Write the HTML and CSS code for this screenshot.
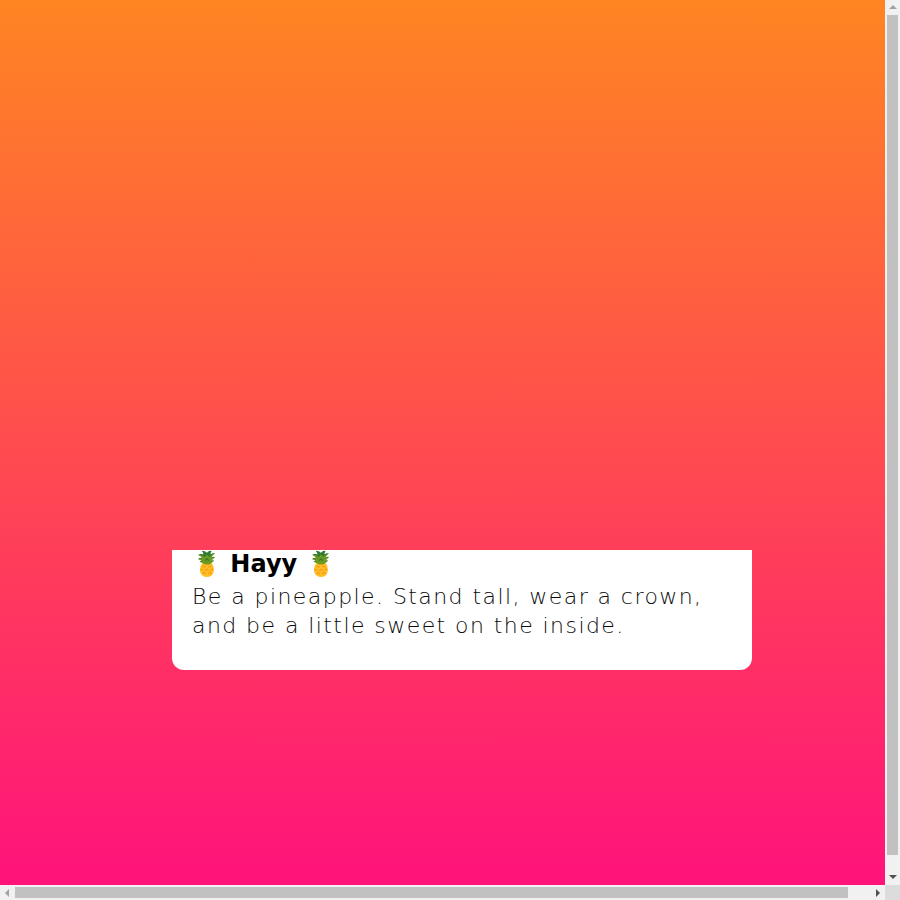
FILE: index.html
```html
<!DOCTYPE html>
<html lang="en">
<head>
<meta charset="utf-8">
<title>Hayy</title>
<link rel="stylesheet" href="styles.css">
</head>
<body>
<main class="page">
  <section class="card">
    <h1 class="card-title">🍍 Hayy 🍍</h1>
    <p class="card-text">Be a pineapple. Stand tall, wear a crown, and be a little sweet on the inside.</p>
  </section>
</main>
<div class="sb sb-v" aria-hidden="true">
  <span class="arrow arrow-up"></span>
  <span class="thumb"></span>
  <span class="arrow arrow-down"></span>
</div>
<div class="sb sb-h" aria-hidden="true">
  <span class="arrow arrow-left"></span>
  <span class="thumb"></span>
  <span class="arrow arrow-right"></span>
</div>
<div class="sb-corner" aria-hidden="true"></div>
</body>
</html>
```
FILE: styles.css
```css
html {
  background: linear-gradient(to bottom, #ff8522 0%, #ff117d 100%);
  min-height: 100%;
}
body {
  margin: 0;
  font-family: "DejaVu Sans", sans-serif;
}
.page {
  box-sizing: border-box;
  width: 908px;
  height: 901px;
  padding: 550px 0 0 172px;
}
.card {
  box-sizing: border-box;
  width: 580px;
  background: #ffffff;
  border-radius: 0 0 12px 12px;
  padding: 0 20px 30px 20px;
}
.card-title {
  margin: 0;
  font-size: 24px;
  font-weight: 700;
  line-height: 28px;
  color: #000000;
}
.card-text {
  margin: 4px 0 0 0;
  font-family: "DejaVu Sans ExtraLight", "DejaVu Sans", sans-serif;
  font-size: 22px;
  font-weight: 200;
  line-height: 29px;
  letter-spacing: 1.43px;
  color: #0a0a0a;
}

/* classic scrollbars drawn over the page edges */
.sb {
  position: fixed;
  background: #f1f1f1;
  display: flex;
  align-items: center;
  justify-content: flex-start;
  box-sizing: border-box;
}
.sb-v {
  top: 0;
  right: 0;
  width: 15px;
  height: 885px;
  flex-direction: column;
}
.sb-h {
  left: 0;
  bottom: 0;
  width: 885px;
  height: 15px;
}
.sb-corner {
  position: fixed;
  right: 0;
  bottom: 0;
  width: 15px;
  height: 15px;
  background: #dcdcdc;
}
.thumb {
  background: #c1c1c1;
  flex: none;
}
.sb-v .thumb {
  width: 11px;
  height: 840px;
}
.sb-h .thumb {
  height: 11px;
  width: 833px;
}
.arrow {
  width: 0;
  height: 0;
  flex: none;
}
.arrow-up {
  margin-top: 5px;
  margin-bottom: 6px;
  border-left: 4px solid transparent;
  border-right: 4px solid transparent;
  border-bottom: 4px solid #a3a3a3;
}
.arrow-down {
  margin-top: auto;
  margin-bottom: 6px;
  border-left: 4px solid transparent;
  border-right: 4px solid transparent;
  border-top: 4px solid #505050;
}
.arrow-left {
  margin-left: 5px;
  margin-right: 6px;
  border-top: 4px solid transparent;
  border-bottom: 4px solid transparent;
  border-right: 4px solid #a3a3a3;
}
.arrow-right {
  margin-left: auto;
  margin-right: 5px;
  border-top: 4px solid transparent;
  border-bottom: 4px solid transparent;
  border-left: 4px solid #505050;
}
```
